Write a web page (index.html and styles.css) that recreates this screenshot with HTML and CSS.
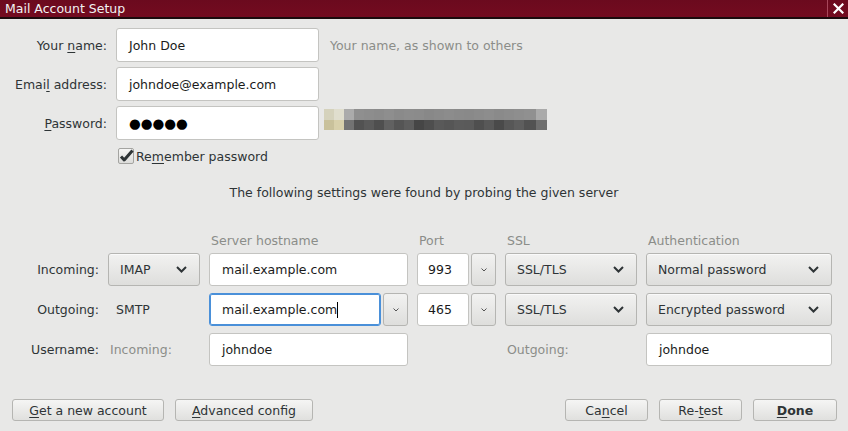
FILE: index.html
```html
<!DOCTYPE html>
<html lang="en">
<head>
  <meta charset="UTF-8" />
  <title>Mail Account Setup</title>
  <link rel="stylesheet" href="styles.css">
</head>
<body>
  <div class="titlebar">
    <span class="title">Mail Account Setup</span>
    <span class="close">
      <svg width="11" height="11" viewBox="0 0 11 11"><path d="M1.5 1.5l8 8M9.5 1.5l-8 8" stroke="#fff" stroke-width="2.2" stroke-linecap="square"/></svg>
    </span>
  </div>

  <div class="identity">
    <label class="lbl">Your <u>n</u>ame:</label>
    <div class="field">John Doe</div>
    <span class="hint">Your name, as shown to others</span>

    <label class="lbl">Emai<u>l</u> address:</label>
    <div class="field">johndoe@example.com</div>
    <span></span>

    <label class="lbl"><u>P</u>assword:</label>
    <div class="field dots">●●●●●</div>
    <div class="strength"><div class="strength-top"></div><div class="strength-bottom"></div></div>
  </div>

  <div class="checkrow">
    <span class="checkbox">
      <svg width="17" height="14" viewBox="0 0 17 14"><path d="M3 7.5l3.2 3.5L14.5 1.5" fill="none" stroke="#2e3436" stroke-width="3" stroke-linejoin="round"/></svg>
    </span>
    <span>Re<u>m</u>ember password</span>
  </div>

  <p class="note">The following settings were found by probing the given server</p>

  <div class="servers">
    <span></span>
    <span></span>
    <span class="head">Server hostname</span>
    <span class="head">Port</span>
    <span class="head">SSL</span>
    <span class="head">Authentication</span>

    <span class="rowlbl">Incoming:</span>
    <div class="combo">IMAP <svg class="chev" width="11" height="7" viewBox="0 0 11 7"><path d="M1 1l4.5 4.5L10 1" fill="none" stroke="#2e3436" stroke-width="2"/></svg></div>
    <div class="field">mail.example.com</div>
    <div class="pair">
      <div class="field port">993</div>
      <div class="dropbtn"><svg width="6" height="4" viewBox="0 0 6 4"><path d="M0.5 0.5l2.5 2.5 2.5-2.5" fill="none" stroke="#555" stroke-width="1"/></svg></div>
    </div>
    <div class="combo">SSL/TLS <svg class="chev" width="11" height="7" viewBox="0 0 11 7"><path d="M1 1l4.5 4.5L10 1" fill="none" stroke="#2e3436" stroke-width="2"/></svg></div>
    <div class="combo">Normal password <svg class="chev" width="11" height="7" viewBox="0 0 11 7"><path d="M1 1l4.5 4.5L10 1" fill="none" stroke="#2e3436" stroke-width="2"/></svg></div>

    <span class="rowlbl">Outgoing:</span>
    <span class="plain">SMTP</span>
    <div class="pair">
      <div class="field focus">mail.example.com<span class="caret"></span></div>
      <div class="dropbtn"><svg width="6" height="4" viewBox="0 0 6 4"><path d="M0.5 0.5l2.5 2.5 2.5-2.5" fill="none" stroke="#555" stroke-width="1"/></svg></div>
    </div>
    <div class="pair">
      <div class="field port">465</div>
      <div class="dropbtn"><svg width="6" height="4" viewBox="0 0 6 4"><path d="M0.5 0.5l2.5 2.5 2.5-2.5" fill="none" stroke="#555" stroke-width="1"/></svg></div>
    </div>
    <div class="combo">SSL/TLS <svg class="chev" width="11" height="7" viewBox="0 0 11 7"><path d="M1 1l4.5 4.5L10 1" fill="none" stroke="#2e3436" stroke-width="2"/></svg></div>
    <div class="combo">Encrypted password <svg class="chev" width="11" height="7" viewBox="0 0 11 7"><path d="M1 1l4.5 4.5L10 1" fill="none" stroke="#2e3436" stroke-width="2"/></svg></div>

    <span class="rowlbl">Username:</span>
    <span class="dim">Incoming:</span>
    <div class="field">johndoe</div>
    <span></span>
    <span class="dim">Outgoing:</span>
    <div class="field">johndoe</div>
  </div>

  <div class="footer">
    <div class="group">
      <button class="btn wide"><u>G</u>et a new account</button>
      <button class="btn mid"><u>A</u>dvanced config</button>
    </div>
    <div class="group">
      <button class="btn small">Ca<u>n</u>cel</button>
      <button class="btn small">Re-<u>t</u>est</button>
      <button class="btn small default"><u>D</u>one</button>
    </div>
  </div>
</body>
</html>
```

FILE: styles.css
```css
body {
  margin: 0;
  width: 848px;
  height: 431px;
  overflow: hidden;
  display: flex;
  flex-direction: column;
  font-family: "DejaVu Sans", sans-serif;
  font-size: 12.5px;
  background: #e8e8e7;
  color: #2e3436;
}
u {
  text-decoration-thickness: 1px;
  text-underline-offset: 2px;
}
.titlebar {
  height: 17px;
  display: flex;
  align-items: center;
  padding-left: 5px;
  background: linear-gradient(#6b0a1e, #740b20);
  border-bottom: 2px solid #1c0a0d;
  color: #f2f2f2;
}
.title {
  flex: 1;
}
.close {
  width: 20px;
  height: 100%;
  display: flex;
  align-items: center;
  justify-content: center;
  border-left: 1px solid #a8475b;
}
.identity {
  display: grid;
  grid-template-columns: 107px 203px auto;
  grid-auto-rows: 34px;
  column-gap: 9px;
  row-gap: 5px;
  margin-top: 9px;
  align-items: center;
}
.lbl, .rowlbl {
  text-align: right;
}
.field {
  height: 100%;
  box-sizing: border-box;
  display: flex;
  align-items: center;
  padding-left: 12px;
  background: #fff;
  border: 1px solid #c4c4c1;
  border-radius: 3px;
  color: #1a1a1a;
}
.dots {
  font-size: 13.5px;
  color: #000;
}
.hint {
  color: #8b8d89;
  padding-left: 2px;
}
.strength {
  width: 223px;
  margin: 3px 0 0 -4px;
  align-self: start;
}
.strength-top, .strength-bottom {
  height: 10.5px;
}
.strength-top {
  background: linear-gradient(to right,
    #d5d2bc 0 10px, #e0dece 10px 20px, #ababab 20px 30px, #8f8f8f 30px 40px,
    #8d8d8d 40px 50px, #8b8b8b 50px 60px, #8e8e8e 60px 70px, #8a8a8a 70px 80px,
    #8c8c8c 80px 90px, #8b8b8b 90px 100px, #888 100px 110px, #8a8a8a 110px 120px,
    #8c8c8c 120px 130px, #8a8a8a 130px 140px, #898989 140px 150px, #8b8b8b 150px 160px,
    #8d8d8d 160px 170px, #8a8a8a 170px 180px, #8c8c8c 180px 190px, #8e8e8e 190px 200px,
    #909090 200px 212px, #aaa 212px 223px);
}
.strength-bottom {
  background: linear-gradient(to right,
    #c9c19b 0 10px, #d8d0ab 10px 20px, #737373 20px 30px, #525252 30px 40px,
    #5a5a5a 40px 50px, #4f4f4f 50px 60px, #616161 60px 70px, #555 70px 80px,
    #5d5d5d 80px 90px, #464646 90px 100px, #4e4e4e 100px 110px, #595959 110px 120px,
    #565656 120px 130px, #5b5b5b 130px 140px, #5a5a5a 140px 150px, #4f4f4f 150px 160px,
    #585858 160px 170px, #4a4a4a 170px 180px, #575757 180px 190px, #5e5e5e 190px 200px,
    #525252 200px 212px, #6e6e6e 212px 223px);
}
.checkrow {
  display: flex;
  align-items: center;
  gap: 2px;
  margin: 8px 0 0 118px;
}
.checkbox {
  position: relative;
  width: 14px;
  height: 14px;
  border: 1px solid #a4a4a1;
  border-radius: 2px;
  background: linear-gradient(#f6f6f5, #dcdcda);
}
.checkbox svg {
  position: absolute;
  left: -1px;
  top: 0;
}
.note {
  margin: 21px 0 0;
  text-align: center;
}
.servers {
  display: grid;
  grid-template-columns: 99px 92px 199px 79px 132px 186px;
  grid-template-rows: 11px repeat(3, 33px);
  column-gap: 9px;
  row-gap: 7px;
  margin-top: 35px;
  align-items: center;
}
.head {
  color: #8b8d89;
  line-height: 12px;
  padding-left: 2px;
}
.plain {
  padding-left: 8px;
}
.dim {
  color: #8b8d89;
  padding-left: 2px;
}
.combo {
  height: 100%;
  box-sizing: border-box;
  display: flex;
  align-items: center;
  justify-content: space-between;
  padding: 0 12px 0 11px;
  background: linear-gradient(#f2f2f1, #dededc);
  border: 1px solid #b5b5b2;
  border-radius: 3px;
  box-shadow: inset 0 1px #fafafa;
}
.pair {
  height: 100%;
  display: flex;
  gap: 2px;
}
.pair .field {
  flex: 1;
}
.port {
  padding-left: 10px;
}
.focus {
  border-color: #4a90d9;
  box-shadow: inset 0 0 0 1px #4a90d9;
}
.caret {
  width: 1px;
  height: 16px;
  background: #000;
}
.dropbtn {
  width: 25px;
  box-sizing: border-box;
  display: flex;
  align-items: center;
  justify-content: center;
  background: linear-gradient(#f2f2f1, #dededc);
  border: 1px solid #b5b5b2;
  border-radius: 3px;
}
.footer {
  margin-top: auto;
  display: flex;
  justify-content: space-between;
  padding: 0 11px 10px 12px;
}
.group {
  display: flex;
  gap: 11px;
}
.btn {
  height: 22px;
  padding: 0;
  font-family: inherit;
  font-size: 12.5px;
  color: #2e3436;
  background: linear-gradient(#f5f5f4, #e0e0de);
  border: 1px solid #b5b5b2;
  border-radius: 3px;
}
.wide {
  width: 152px;
}
.mid {
  width: 138px;
}
.small {
  width: 83px;
}
.default {
  width: 84px;
  font-weight: bold;
}
```
